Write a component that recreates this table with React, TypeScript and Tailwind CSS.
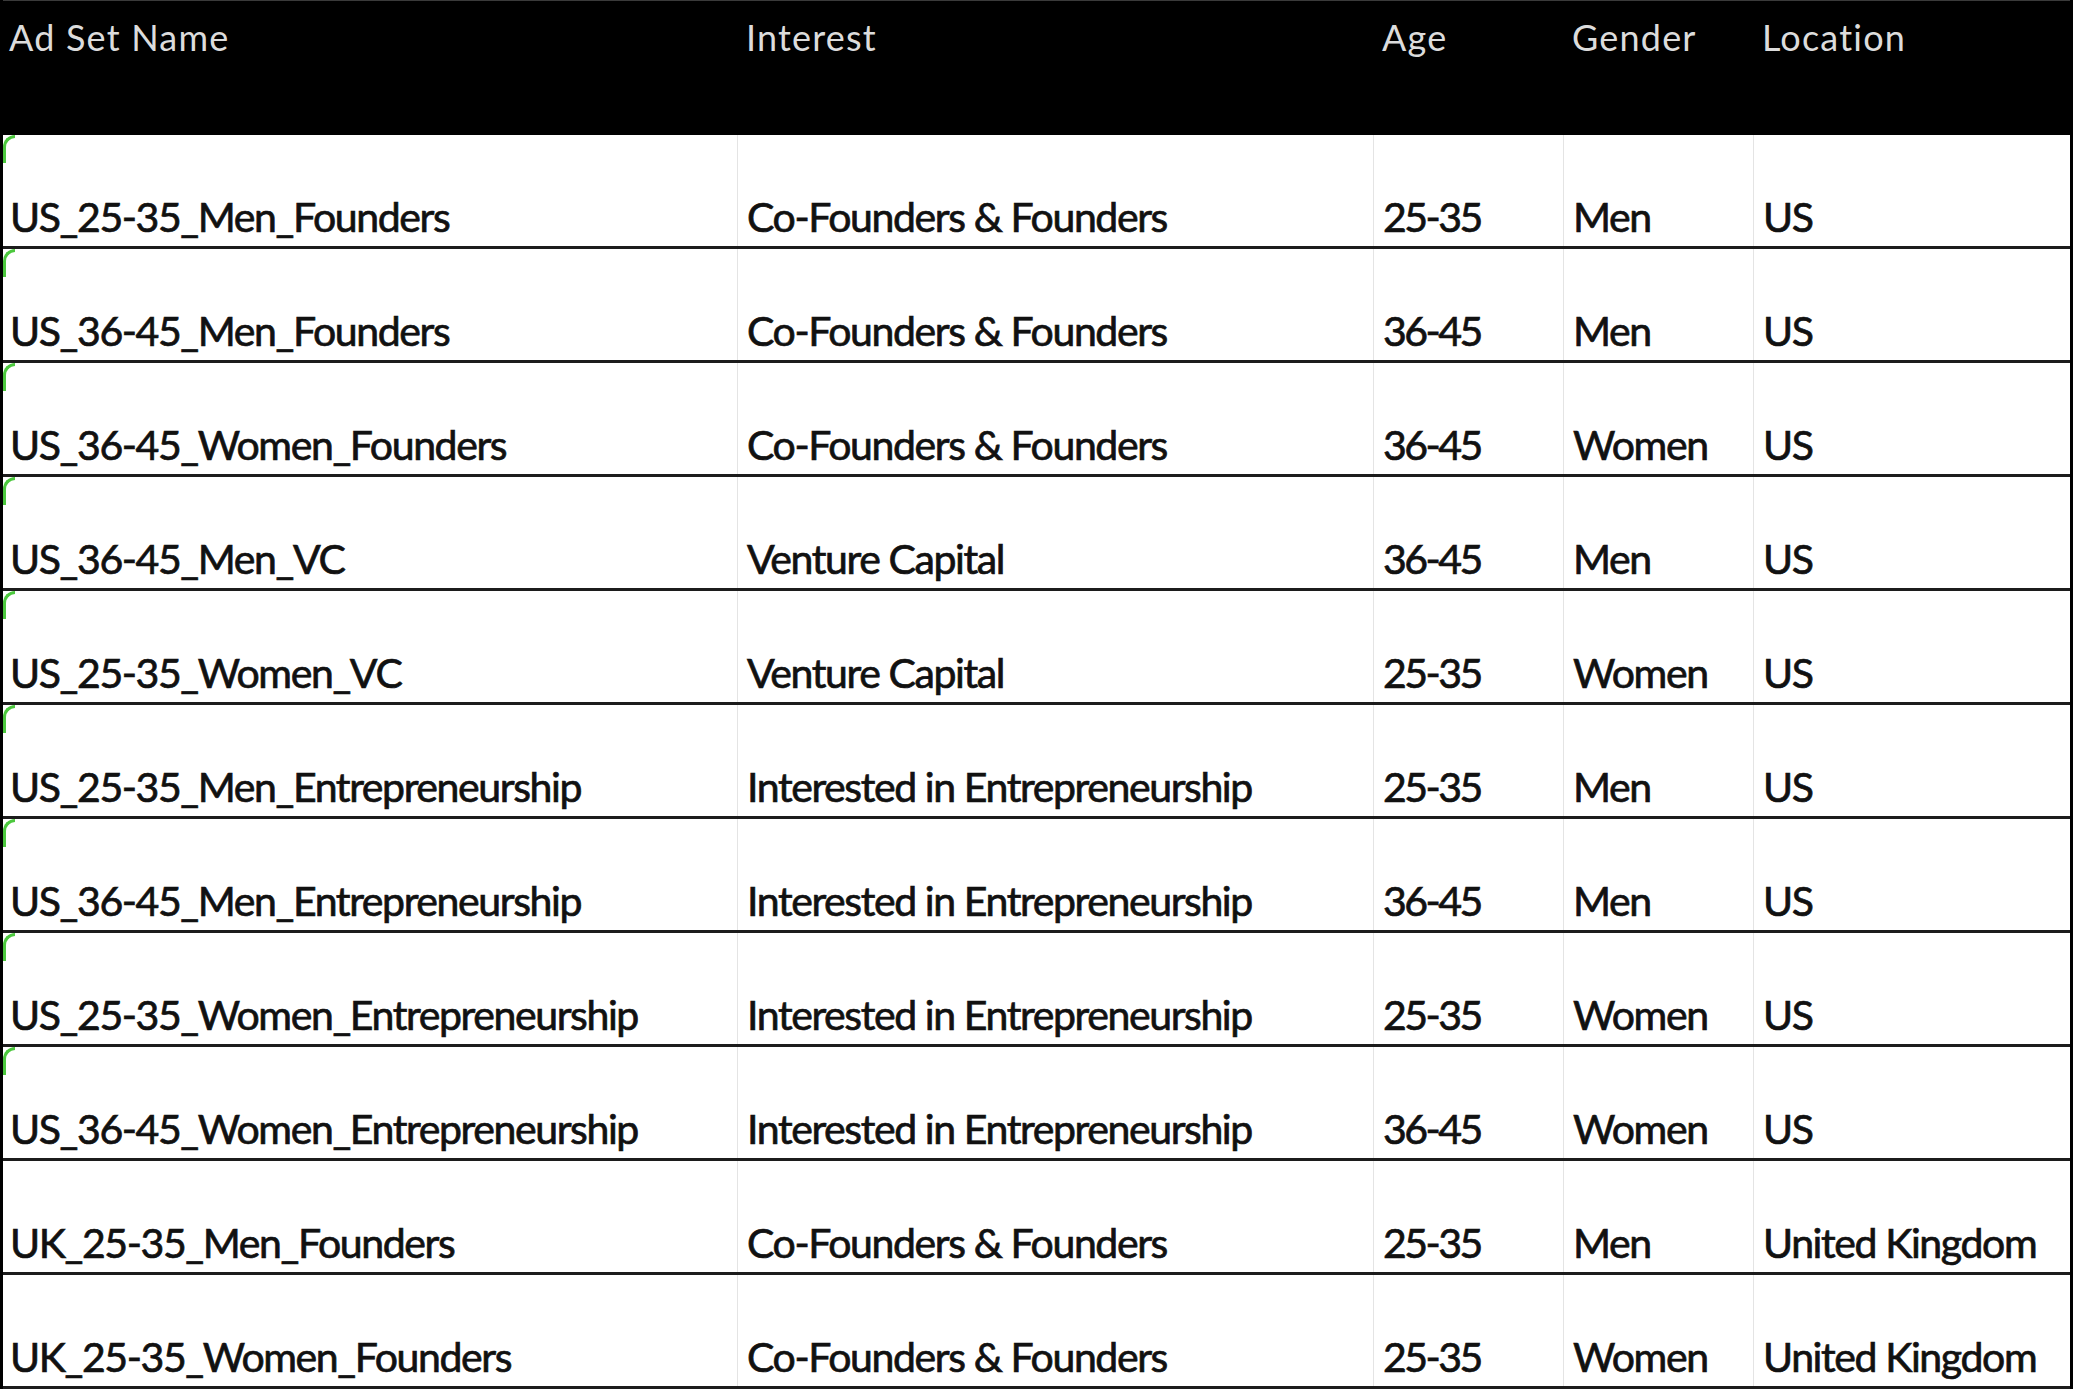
const rows = [
  ['US_25-35_Men_Founders', 'Co-Founders & Founders', '25-35', 'Men', 'US'],
  ['US_36-45_Men_Founders', 'Co-Founders & Founders', '36-45', 'Men', 'US'],
  ['US_36-45_Women_Founders', 'Co-Founders & Founders', '36-45', 'Women', 'US'],
  ['US_36-45_Men_VC', 'Venture Capital', '36-45', 'Men', 'US'],
  ['US_25-35_Women_VC', 'Venture Capital', '25-35', 'Women', 'US'],
  ['US_25-35_Men_Entrepreneurship', 'Interested in Entrepreneurship', '25-35', 'Men', 'US'],
  ['US_36-45_Men_Entrepreneurship', 'Interested in Entrepreneurship', '36-45', 'Men', 'US'],
  ['US_25-35_Women_Entrepreneurship', 'Interested in Entrepreneurship', '25-35', 'Women', 'US'],
  ['US_36-45_Women_Entrepreneurship', 'Interested in Entrepreneurship', '36-45', 'Women', 'US'],
  ['UK_25-35_Men_Founders', 'Co-Founders & Founders', '25-35', 'Men', 'United Kingdom'],
  ['UK_25-35_Women_Founders', 'Co-Founders & Founders', '25-35', 'Women', 'United Kingdom'],
];

const headers = ['Ad Set Name', 'Interest', 'Age', 'Gender', 'Location'];

export default function App() {
  return (
    <div className="w-[2076px] h-[1393px] bg-white overflow-hidden" style={{ fontFamily: 'Lato, "Open Sans", sans-serif' }}>
      <div className="w-[2073px] border-l-[3px] border-r-[3px] border-black">
        {/* Header */}
        <div className="grid grid-cols-[734px_636px_190px_190px_1fr] h-[135px] bg-black border-t border-[#3a3a3a]">
          {headers.map((h, i) => (
            <div key={h} className={`${i === 0 ? 'pl-[6px]' : 'pl-[9px]'} pt-[18px] text-[36px] tracking-[1.2px] leading-none text-[#dcdcdc] whitespace-nowrap`}>
              {h}
            </div>
          ))}
        </div>

        {/* Rows */}
        {rows.map((r, ri) => (
          <div key={ri} className="relative grid grid-cols-[734px_636px_190px_190px_1fr] h-[114px] border-b-[3px] border-[#1c1c1c]">
            {ri < 9 && (
              <div className="absolute left-0 top-0 w-[12px] h-[28px] border-l-[3px] border-t-[3px] border-[#4cc83e] rounded-tl-[12px]" />
            )}
            {r.map((c, ci) => (
              <div
                key={ci}
                className={`flex items-end pb-[9px] text-[41px] tracking-[-1.4px] leading-none text-[#111] whitespace-nowrap [-webkit-text-stroke:0.7px_#111] ${ci === 0 ? 'pl-[7px]' : 'pl-[9px] border-l border-[#e4e4e4]'} ${ci === 2 ? 'tracking-[-2.5px]' : ''}`}
              >
                {c}
              </div>
            ))}
          </div>
        ))}
      </div>
    </div>
  );
}
